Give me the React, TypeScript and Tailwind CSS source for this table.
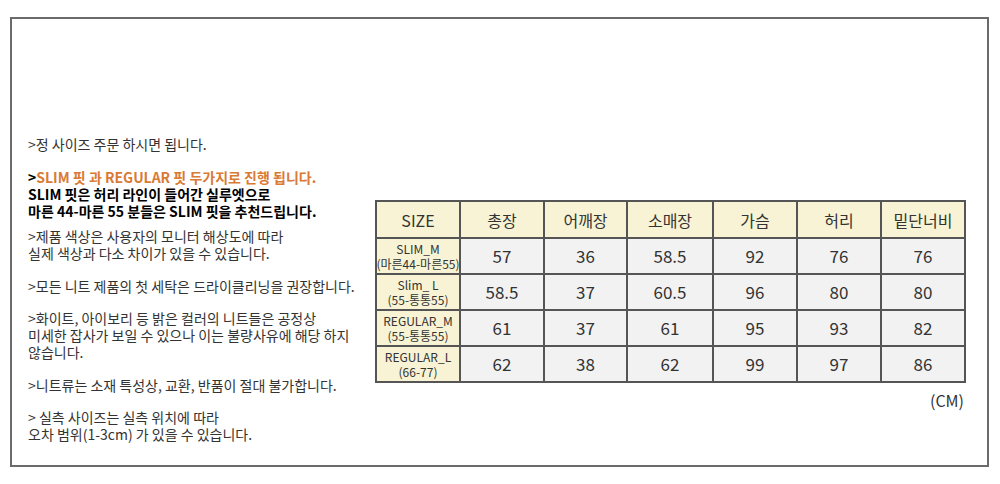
const rows = [
  { name: "SLIM_M", sub: "(마른44-마른55)", vals: ["57", "36", "58.5", "92", "76", "76"] },
  { name: "Slim_ L", sub: "(55-통통55)", vals: ["58.5", "37", "60.5", "96", "80", "80"] },
  { name: "REGULAR_M", sub: "(55-통통55)", vals: ["61", "37", "61", "95", "93", "82"] },
  { name: "REGULAR_L", sub: "(66-77)", vals: ["62", "38", "62", "99", "97", "86"] },
];

const heads = ["SIZE", "총장", "어깨장", "소매장", "가슴", "허리", "밑단너비"];

export default function App() {
  return (
    <div
      className="w-[1000px] h-[484px] bg-white pt-[17px] pl-[10px]"
      style={{ fontFamily: '"Noto Sans CJK KR", "Noto Sans", sans-serif' }}
    >
      <div className="w-[979px] h-[450px] border-2 border-[#6b6b6b] flex">
        {/* notes */}
        <div className="w-[363px] shrink-0 pl-[16px] pt-[117px] text-[14px] leading-[17px] text-[#333] whitespace-nowrap">
          <p>&gt;정 사이즈 주문 하시면 됩니다.</p>
          <div className="mt-[16px] font-bold text-black">
            <p className="text-[#d97a35]">
              <span className="text-black">&gt;</span>SLIM 핏 과 REGULAR 핏 두가지로 진행 됩니다.
            </p>
            <p>SLIM 핏은 허리 라인이 들어간 실루엣으로</p>
            <p>마른 44-마른 55 분들은 SLIM 핏을 추천드립니다.</p>
          </div>
          <div className="mt-[8px]">
            <p>&gt;제품 색상은 사용자의 모니터 해상도에 따라</p>
            <p>실제 색상과 다소 차이가 있을 수 있습니다.</p>
          </div>
          <p className="mt-[16px]">&gt;모든 니트 제품의 첫 세탁은 드라이클리닝을 권장합니다.</p>
          <div className="mt-[15px]">
            <p>&gt;화이트, 아이보리 등 밝은 컬러의 니트들은 공정상</p>
            <p>미세한 잡사가 보일 수 있으나 이는 불량사유에 해당 하지</p>
            <p>않습니다.</p>
          </div>
          <p className="mt-[16px]">&gt;니트류는 소재 특성상, 교환, 반품이 절대 불가합니다.</p>
          <div className="mt-[15px]">
            <p>&gt; 실측 사이즈는 실측 위치에 따라</p>
            <p>오차 범위(1-3cm) 가 있을 수 있습니다.</p>
          </div>
        </div>

        {/* size table */}
        <div className="pt-[181px]">
          <div className="grid grid-cols-[82px_82px_81px_84px_82px_82px_82px] border-2 border-[#555] bg-[#555] gap-[2px] w-[591px]">
            {heads.map((h) => (
              <div
                key={h}
                className="h-[35px] bg-[#f7f3d4] flex items-center justify-center text-[16px] text-[#333]"
              >
                {h}
              </div>
            ))}
            {rows.map((r) => (
              <>
                <div
                  key={r.name}
                  className="h-[34px] bg-[#f7f3d4] flex flex-col items-center justify-center text-[12px] leading-[15px] text-[#333] whitespace-nowrap"
                >
                  <span>{r.name}</span>
                  <span>{r.sub}</span>
                </div>
                {r.vals.map((v, i) => (
                  <div
                    key={r.name + i}
                    className="h-[34px] bg-[#f2f2f2] flex items-center justify-center text-[17px] text-[#333]"
                  >
                    {v}
                  </div>
                ))}
              </>
            ))}
          </div>
          <p className="mt-[5px] text-right text-[16px] text-[#333] pr-[2px]">(CM)</p>
        </div>
      </div>
    </div>
  );
}
